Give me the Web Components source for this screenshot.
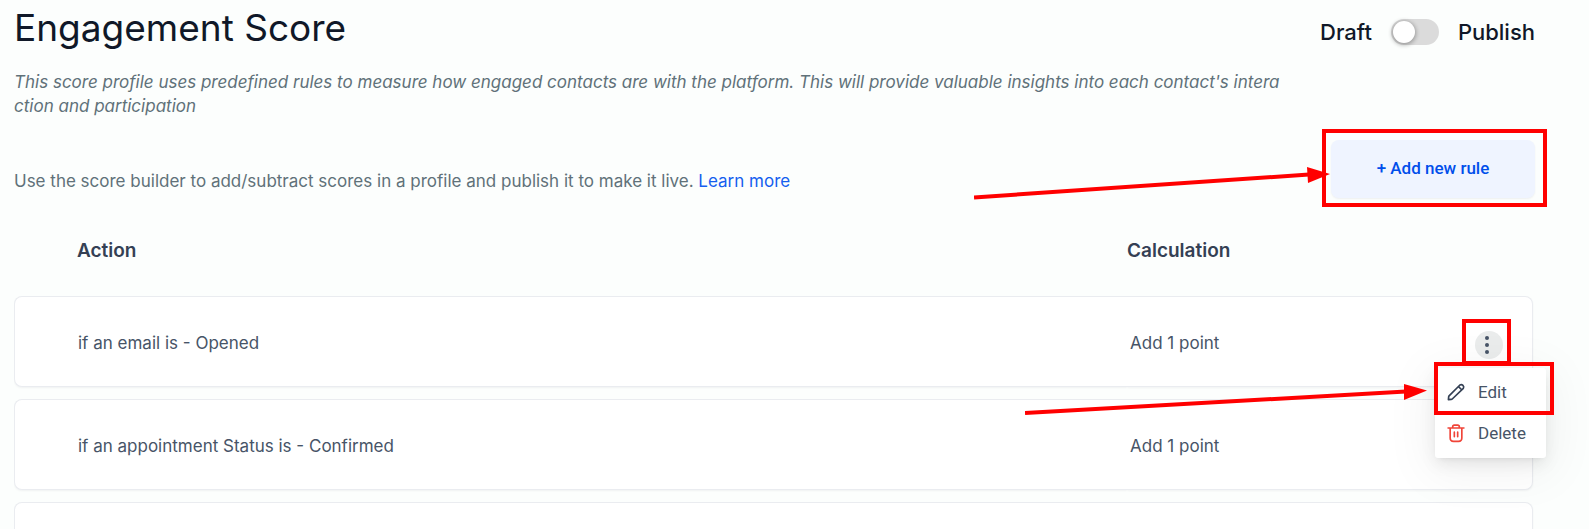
<!DOCTYPE html>
<html lang="en">
<head>
<meta charset="utf-8">
<meta name="viewport" content="width=device-width, initial-scale=1">
<title>Engagement Score</title>
<style>
    body {
        margin: 0;
        background: #fcfefd;
        font-family: Inter, "Liberation Sans", sans-serif;
        color: #475467;
    }
</style>
</head>
<body>
<score-page>
    <score-header slot="header" heading="Engagement Score">
        This score profile uses predefined rules to measure how engaged contacts are with the platform. This will provide valuable insights into each contact's interaction and participation
    </score-header>
    <score-toolbar slot="toolbar">
        Use the score builder to add/subtract scores in a profile and publish it to make it live. <a href="#learn">Learn more</a>
    </score-toolbar>
    <rule-table></rule-table>
</score-page>

<script>
class ScorePage extends HTMLElement {
    constructor(){
        super()
        this.attachShadow({ mode: 'open' })
    }
    connectedCallback(){
        this.shadowRoot.innerHTML = `
            <style>
                :host {
                    display: block;
                    height: 100vh;
                    overflow: hidden;
                }
                main {
                    display: flex;
                    flex-direction: column;
                    padding: 6px 54px 0 14px;
                }
            </style>
            <main>
                <slot name="header"></slot>
                <slot name="toolbar"></slot>
                <slot></slot>
            </main>
        `
    }
}

class ScoreHeader extends HTMLElement {
    constructor(){
        super()
        this.attachShadow({ mode: 'open' })
    }
    connectedCallback(){
        this.shadowRoot.innerHTML = `
            <style>
                :host {
                    display: block;
                }
                .top {
                    display: flex;
                    justify-content: space-between;
                    align-items: center;
                }
                h1 {
                    margin: 0;
                    font-size: 37px;
                    font-weight: 400;
                    line-height: 44px;
                    color: #101828;
                }
                p {
                    margin: 20px 0 0;
                    width: calc(100% - 251px);
                    font-size: 17px;
                    font-style: italic;
                    line-height: 24px;
                    word-break: break-all;
                    color: #607179;
                }
            </style>
            <div class="top">
                <h1>${this.getAttribute('heading')}</h1>
                <publish-toggle></publish-toggle>
            </div>
            <p><slot></slot></p>
        `
    }
}

class PublishToggle extends HTMLElement {
    constructor(){
        super()
        this.attachShadow({ mode: 'open' })
    }
    connectedCallback(){
        this.shadowRoot.innerHTML = `
            <style>
                :host {
                    display: block;
                    padding-top: 8px;
                }
                label {
                    display: flex;
                    align-items: center;
                    gap: 19px;
                    font-size: 22px;
                    font-weight: 500;
                    line-height: 28px;
                    color: #101828;
                }
                input {
                    appearance: none;
                    display: flex;
                    align-items: center;
                    box-sizing: border-box;
                    width: 48px;
                    height: 26px;
                    margin: 0;
                    padding: 2px;
                    border-radius: 13px;
                    background: #dbdbdb;
                }
                input::before {
                    content: "";
                    width: 22px;
                    height: 22px;
                    border-radius: 50%;
                    background: #fff;
                    box-shadow: 0 1px 4px 1px rgba(0, 0, 0, .3);
                }
                input:checked {
                    justify-content: flex-end;
                    background: #155eef;
                }
            </style>
            <label>
                <span>Draft</span>
                <input type="checkbox" role="switch">
                <span>Publish</span>
            </label>
        `
    }
}

class ScoreToolbar extends HTMLElement {
    constructor(){
        super()
        this.attachShadow({ mode: 'open' })
    }
    connectedCallback(){
        this.shadowRoot.innerHTML = `
            <style>
                :host {
                    display: flex;
                    justify-content: space-between;
                    align-items: center;
                    margin-top: 22px;
                }
                p {
                    margin: 0;
                    padding-top: 24px;
                    font-size: 17px;
                    line-height: 24px;
                    color: #607179;
                }
                ::slotted(a) {
                    color: #155eef;
                    text-decoration: none;
                }
                .add {
                    position: relative;
                }
                button {
                    display: block;
                    width: 204px;
                    height: 58px;
                    padding: 0 0 2px;
                    border: none;
                    border-radius: 8px;
                    background: #eff4ff;
                    box-shadow: 0 1px 2px rgba(16, 24, 40, .06);
                    font: 500 17px/24px Roboto, sans-serif;
                    color: #004eeb;
                }
                call-out {
                    inset: -11px -12px -9px -9px;
                }
            </style>
            <p><slot></slot></p>
            <div class="add">
                <button type="button">+ Add new rule</button>
                <call-out arrow="add"></call-out>
            </div>
        `
    }
}

// Red frame drawn over its parent, with an optional arrow that leads to it
class CallOut extends HTMLElement {
    constructor(){
        super()
        this.attachShadow({ mode: 'open' })
    }
    getArrow(){
        const arrows = {
            add: `
                <svg class="add" width="356" height="34" viewBox="0 0 356 34">
                    <path d="M0 30.500 335 7.500" stroke="red" stroke-width="4"/>
                    <path d="M333 0 356 7 334 16z" fill="red"/>
                </svg>`,
            edit: `
                <svg class="edit" width="402" height="33" viewBox="0 0 402 33">
                    <path d="M0 29 381 7.500" stroke="red" stroke-width="4"/>
                    <path d="M379 0 402 6.500 379 16z" fill="red"/>
                </svg>`
        }
        return arrows[this.getAttribute('arrow')] || ''
    }
    connectedCallback(){
        this.shadowRoot.innerHTML = `
            <style>
                :host {
                    display: block;
                    position: absolute;
                    box-sizing: border-box;
                    border: 4px solid red;
                    pointer-events: none;
                }
                svg {
                    position: absolute;
                }
                .add {
                    top: 34px;
                    right: 213px;
                }
                .edit {
                    top: 18px;
                    right: 123px;
                }
            </style>
            ${this.getArrow()}
        `
    }
}

class RuleMenu extends HTMLElement {
    constructor(){
        super()
        this.attachShadow({ mode: 'open' })
    }
    connectedCallback(){
        this.shadowRoot.innerHTML = `
            <style>
                :host {
                    display: block;
                    box-sizing: border-box;
                    width: 111px;
                    padding: 4px 0;
                    border-radius: 3px;
                    background: #fff;
                    box-shadow: 0 3px 6px -4px rgba(0, 0, 0, .12), 0 6px 16px rgba(0, 0, 0, .08), 0 9px 48px 8px rgba(0, 0, 0, .05);
                }
                .item {
                    position: relative;
                }
                button {
                    display: flex;
                    align-items: center;
                    gap: 12px;
                    width: 100%;
                    height: 41px;
                    padding: 0 11px;
                    border: none;
                    background: none;
                    font: 400 17px/24px Roboto, sans-serif;
                    color: #475467;
                }
                svg {
                    flex: none;
                    fill: none;
                    stroke: #344054;
                    stroke-width: 2;
                    stroke-linecap: round;
                    stroke-linejoin: round;
                }
                .delete svg {
                    stroke: #f04438;
                }
                call-out {
                    inset: -10px -8px -2px -1px;
                }
            </style>
            <div class="item">
                <button type="button">
                    <svg width="20" height="20" viewBox="0 0 24 24"><path d="M15 5.500 18.500 9M2.900 21.100l.3-3.200c.1-.6.200-.9.500-1.200L16.700 3.600a3 3 0 0 1 4.100 4.100L7.500 20.400c-.3.300-.7.500-1.200.5z"/></svg>
                    Edit
                </button>
                <call-out arrow="edit"></call-out>
            </div>
            <div class="item delete">
                <button type="button">
                    <svg width="20" height="20" viewBox="0 0 24 24"><path d="M2.500 6h19M8 6V4.500Q8 2.500 10 2.500h4q2 0 2 2V6M5 6v12q0 4 4 4h6q4 0 4-4V6M10 11v5.500M14 11v5.500"/></svg>
                    Delete
                </button>
            </div>
        `
    }
}

class RuleTable extends HTMLElement {
    constructor(){
        super()
        this.attachShadow({ mode: 'open' })
        this.rules = [
            { action: 'if an email is - Opened', calculation: 'Add 1 point', open: true },
            { action: 'if an appointment Status is - Confirmed', calculation: 'Add 1 point' },
            { action: '', calculation: '' }
        ]
    }
    getRow(rule){
        return `
            <tr>
                <td>${rule.action}</td>
                <td>${rule.calculation}</td>
                <td>${rule.open ? this.getActions() : ''}</td>
            </tr>
        `
    }
    getActions(){
        return `
            <div class="actions">
                <button type="button" aria-label="Rule actions">
                    <svg width="28" height="28" viewBox="0 0 28 28" fill="#475467"><circle cx="12" cy="7" r="2"/><circle cx="12" cy="14" r="2"/><circle cx="12" cy="21" r="2"/></svg>
                </button>
                <call-out></call-out>
                <rule-menu></rule-menu>
            </div>
        `
    }
    connectedCallback(){
        this.shadowRoot.innerHTML = `
            <style>
                :host {
                    display: block;
                    margin: 28px 2px 0 0;
                }
                table {
                    width: 100%;
                    table-layout: fixed;
                    border-collapse: separate;
                    border-spacing: 0 12px;
                    text-align: left;
                }
                th, td {
                    box-sizing: border-box;
                    padding: 0;
                }
                th {
                    height: 46px;
                    font-size: 19px;
                    font-weight: 600;
                    line-height: 26px;
                    vertical-align: top;
                    color: #344054;
                }
                th:nth-child(2) {
                    width: 352px;
                }
                th:nth-child(3) {
                    width: 54px;
                }
                td {
                    height: 91px;
                    padding-top: 2px;
                    border: 1px solid #eaecf0;
                    border-width: 1px 0;
                    background: #fff;
                    box-shadow: 0 1px 2px rgba(16, 24, 40, .05);
                    clip-path: inset(0 0 -4px 0);
                    font-size: 17px;
                    line-height: 24px;
                }
                th:first-child, td:first-child {
                    padding-left: 63px;
                }
                td:first-child {
                    border-left-width: 1px;
                    border-radius: 8px 0 0 8px;
                }
                td:nth-child(2) {
                    padding-left: 3px;
                }
                td:last-child {
                    border-right-width: 1px;
                    border-radius: 0 8px 8px 0;
                    clip-path: none;
                }
                .actions {
                    position: relative;
                    width: 28px;
                    padding-top: 4px;
                    margin-left: -4px;
                    z-index: 1;
                }
                button {
                    display: block;
                    width: 28px;
                    height: 28px;
                    padding: 0;
                    border: none;
                    border-radius: 50%;
                    background: #eaecec;
                }
                svg {
                    display: block;
                }
                call-out {
                    inset: -8px -8px -6px -13px;
                }
                rule-menu {
                    position: absolute;
                    top: 41px;
                    right: -43px;
                }
            </style>
            <table>
                <thead>
                    <tr><th>Action</th><th>Calculation</th><th></th></tr>
                </thead>
                <tbody>${this.rules.map(rule => this.getRow(rule)).join('')}</tbody>
            </table>
        `
    }
}

customElements.define('call-out', CallOut)
customElements.define('publish-toggle', PublishToggle)
customElements.define('score-header', ScoreHeader)
customElements.define('score-toolbar', ScoreToolbar)
customElements.define('rule-menu', RuleMenu)
customElements.define('rule-table', RuleTable)
customElements.define('score-page', ScorePage)
</script>
</body>
</html>
